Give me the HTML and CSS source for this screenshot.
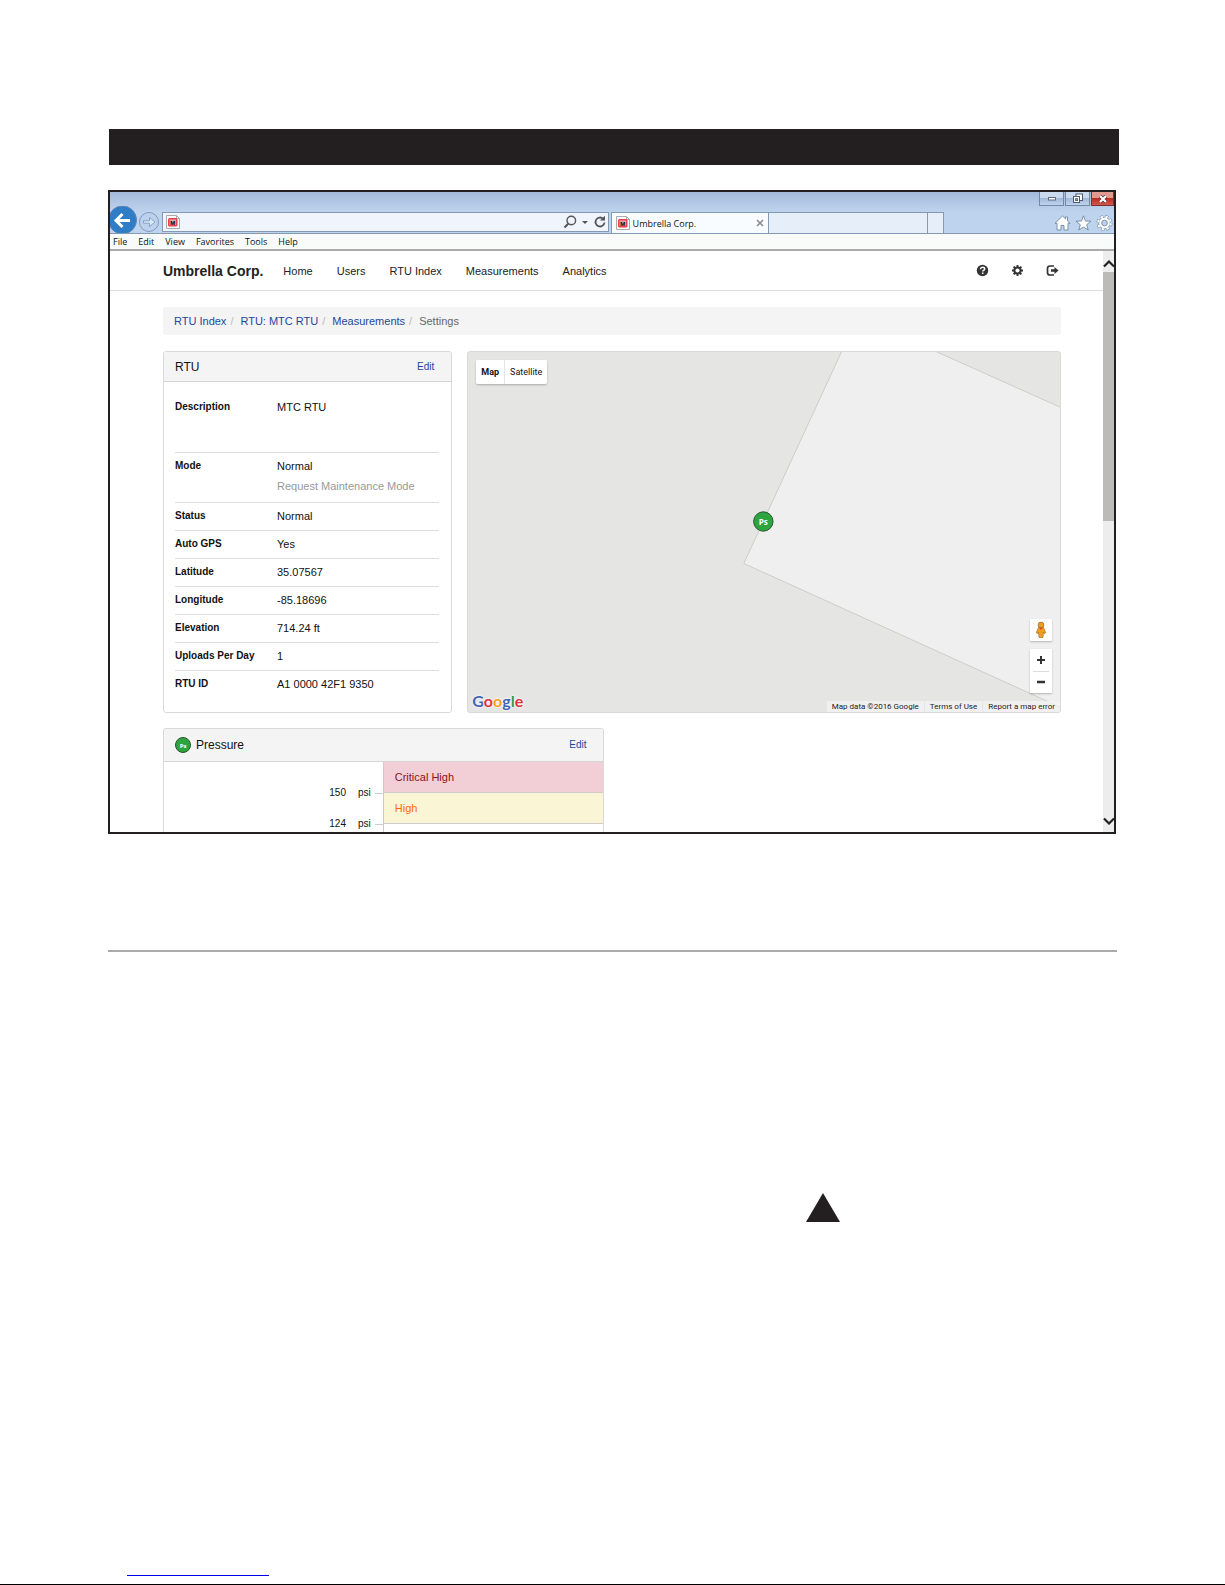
FILE: index.html
```html
<!DOCTYPE html>
<html lang="en">
<head>
<meta charset="utf-8">
<title>Umbrella Corp.</title>
<link rel="stylesheet" href="styles.css">
</head>
<body>
<main class="sheet">
  <div class="band"></div>

  <section class="window">
    <header class="chrome">
      <div class="caption">
        <button class="cap" aria-label="Minimize"><svg width="10" height="6" viewBox="0 0 10 6"><rect x="1.5" y="1.5" width="7" height="2.5" fill="#fff" stroke="#5b6b85"/></svg></button>
        <button class="cap" aria-label="Restore"><svg width="12" height="11" viewBox="0 0 12 11"><rect x="4" y="1" width="6.5" height="6.5" fill="#fff" stroke="#4b5a72"/><rect x="1.5" y="3.5" width="6" height="6" fill="#fff" stroke="#4b5a72"/><rect x="3.6" y="5.6" width="2" height="2" fill="#8aa" stroke="#4b5a72" stroke-width=".8"/></svg></button>
        <button class="cap cap-close" aria-label="Close"><svg width="12" height="10" viewBox="0 0 12 10"><path d="M3 2l6 6M9 2l-6 6" stroke="#6a2a2a" stroke-width="3.6"/><path d="M3 2l6 6M9 2l-6 6" stroke="#fff" stroke-width="2.2"/></svg></button>
      </div>
      <div class="toolbar">
        <div class="history">
          <button class="plain" aria-label="Back"><svg width="27" height="27" viewBox="0 0 27 27"><circle cx="12.5" cy="14" r="14" fill="#2f7cc7" stroke="#5d86b5"/><path d="M20 14.5H7M12.5 8L6 14.5l6.500 6.500" fill="none" stroke="#fff" stroke-width="3"/></svg></button>
          <button class="plain" aria-label="Forward"><svg width="22" height="21" viewBox="0 0 22 21"><circle cx="12" cy="10" r="9.500" fill="#bcd2ec" stroke="#7f9cc0"/><path d="M6.500 8.800h6V5.500l5.500 4.500-5.500 4.500v-3.300h-6z" fill="#dce9f8" stroke="#7f9cc0" stroke-width=".9"/></svg></button>
        </div>
        <div class="address">
          <svg class="favicon" viewBox="0 0 14 14"><path d="M.5.5h10l3 3v10H.5z" fill="#fff" stroke="#aaa"/><path d="M10.500.5v3h3" fill="none" stroke="#aaa"/><rect x="2" y="3" width="9.500" height="8.500" rx="1.500" fill="#e9404f"/><rect x="3.500" y="4.500" width="6.500" height="5.500" fill="#d9a9ab"/><text x="6.750" y="9.600" text-anchor="middle" class="favicon-letter">M</text></svg>
          <input class="address-input" type="text" aria-label="Address">
          <button class="plain" aria-label="Search"><svg width="14" height="14" viewBox="0 0 14 14"><circle cx="8.300" cy="5.500" r="4.300" fill="none" stroke="#555" stroke-width="1.400"/><path d="M5.200 8.700L1.500 12.500" stroke="#555" stroke-width="2"/></svg></button>
          <button class="plain" aria-label="Suggestions"><svg width="14" height="14" viewBox="0 0 14 14"><path d="M4 6h6L7 9z" fill="#555"/></svg></button>
          <button class="plain" aria-label="Refresh"><svg width="14" height="14" viewBox="0 0 14 14"><path d="M10.200 3.800A4.500 4.500 0 1 0 11.500 7.500" fill="none" stroke="#555" stroke-width="1.800"/><path d="M7 5.500h5V.8z" fill="#555"/></svg></button>
        </div>
        <div class="tab tab-active">
          <svg class="favicon" viewBox="0 0 14 14"><path d="M.5.5h10l3 3v10H.5z" fill="#fff" stroke="#aaa"/><path d="M10.500.5v3h3" fill="none" stroke="#aaa"/><rect x="2" y="3" width="9.500" height="8.500" rx="1.500" fill="#e9404f"/><rect x="3.500" y="4.500" width="6.500" height="5.500" fill="#d9a9ab"/><text x="6.750" y="9.600" text-anchor="middle" class="favicon-letter">M</text></svg>
          <span class="tab-title">Umbrella Corp.</span>
          <button class="plain" aria-label="Close tab"><svg width="8" height="8" viewBox="0 0 8 8"><path d="M1 1l6 6M7 1L1 7" stroke="#888" stroke-width="1.500"/></svg></button>
        </div>
        <div class="tab"></div>
        <button class="tab" aria-label="New tab"></button>
        <div class="tools">
          <button class="plain" aria-label="Home page"><svg width="17" height="16" viewBox="0 0 17 16"><path d="M8.500 1L1 8.300h2V15h4v-4.500h3V15h4V8.300h2l-2.500-2.500V2h-2v1.800z" fill="#fff" stroke="#7187a3" stroke-width=".9"/></svg></button>
          <button class="plain" aria-label="Favorites"><svg width="17" height="16" viewBox="0 0 17 16"><path d="M8.500.8l2 5.200 5.500.2-4.300 3.500 1.500 5.300-4.700-3-4.700 3 1.500-5.300L1 6.200 6.500 6z" fill="#fff" stroke="#7187a3" stroke-width=".9"/></svg></button>
          <button class="plain" aria-label="Tools"><svg width="17" height="16" viewBox="0 0 17 16"><circle cx="8.500" cy="8" r="6.500" fill="none" stroke="#7187a3" stroke-width="3" stroke-dasharray="2.900 2.200"/><circle cx="8.500" cy="8" r="5.800" fill="#fff" stroke="#7187a3" stroke-width=".8"/><circle cx="8.500" cy="8" r="6.400" fill="none" stroke="#fff" stroke-width="2" stroke-dasharray="2.400 2.620" stroke-dashoffset="-.2"/><circle cx="8.500" cy="8" r="2.800" fill="#bdd2ec" stroke="#7187a3" stroke-width=".9"/></svg></button>
        </div>
      </div>
      <nav class="menubar">
        <button class="plain">File</button>
        <button class="plain">Edit</button>
        <button class="plain">View</button>
        <button class="plain">Favorites</button>
        <button class="plain">Tools</button>
        <button class="plain">Help</button>
      </nav>
    </header>

    <div class="viewport">
      <div class="page">
        <nav class="navbar">
          <a class="brand" href="#">Umbrella Corp.</a>
          <div class="nav-links">
            <a href="#">Home</a>
            <a href="#">Users</a>
            <a href="#">RTU Index</a>
            <a href="#">Measurements</a>
            <a href="#">Analytics</a>
          </div>
          <div class="nav-icons">
            <a href="#" aria-label="Help"><svg width="13" height="13" viewBox="0 0 13 13"><circle cx="6.500" cy="6.500" r="5.700" fill="#333"/><path d="M4.500 5.200c0-2.600 4.200-2.400 4.200-.2 0 1.500-2 1.300-2 2.600" fill="none" stroke="#fff" stroke-width="1.500"/><rect x="5.900" y="8.500" width="1.600" height="1.500" fill="#fff"/></svg></a>
            <a href="#" aria-label="Settings"><svg width="13" height="13" viewBox="0 0 13 13"><circle cx="6.500" cy="6.500" r="3.100" fill="none" stroke="#333" stroke-width="2"/><path d="M6.500 1v2M6.500 10v2M1 6.500h2M10 6.500h2M2.600 2.600L4 4M9 9l1.400 1.400M10.400 2.600L9 4M4 9l-1.400 1.400" stroke="#333" stroke-width="1.900"/></svg></a>
            <a href="#" aria-label="Log out"><svg width="13" height="13" viewBox="0 0 13 13"><path d="M8 2H4Q1.500 2 1.500 4.500v4Q1.500 11 4 11h4" fill="none" stroke="#333" stroke-width="1.700"/><path d="M5 5.200h3.500V3l4 3.500-4 3.500V7.800H5z" fill="#333"/></svg></a>
          </div>
        </nav>

        <div class="content">
          <ol class="breadcrumb">
            <li><a href="#">RTU Index</a></li>
            <li><a href="#">RTU: MTC RTU</a></li>
            <li><a href="#">Measurements</a></li>
            <li>Settings</li>
          </ol>

          <section class="card card-rtu">
            <header class="card-head">
              <h2>RTU</h2>
              <a href="#">Edit</a>
            </header>
            <table class="facts">
              <tr class="tall"><th scope="row">Description</th><td>MTC RTU</td></tr>
              <tr class="mode"><th scope="row">Mode</th><td>Normal<br><a class="muted" href="#">Request Maintenance Mode</a></td></tr>
              <tr><th scope="row">Status</th><td>Normal</td></tr>
              <tr><th scope="row">Auto GPS</th><td>Yes</td></tr>
              <tr><th scope="row">Latitude</th><td>35.07567</td></tr>
              <tr><th scope="row">Longitude</th><td>-85.18696</td></tr>
              <tr><th scope="row">Elevation</th><td>714.24 ft</td></tr>
              <tr><th scope="row">Uploads Per Day</th><td>1</td></tr>
              <tr><th scope="row">RTU ID</th><td>A1 0000 42F1 9350</td></tr>
            </table>
          </section>

          <section class="card card-map">
            <svg class="map" viewBox="0 0 592 360" preserveAspectRatio="xMidYMid slice">
              <path d="M374 0L276 211.500 612 364V64L469 0z" fill="#efefef"/>
              <path d="M374-1L276 211.500 612 364M467-1L612 64" fill="none" stroke="#cdcdcb"/>
              <circle cx="295.500" cy="169.500" r="9.700" fill="#2da53f" stroke="#26562d"/>
              <text x="295.500" y="172.500" text-anchor="middle" class="pin-text">Ps</text>
            </svg>
            <div class="map-type">
              <button class="is-on">Map</button>
              <button>Satellite</button>
            </div>
            <div class="map-controls">
              <button aria-label="Street View"><svg width="12" height="18" viewBox="0 0 12 18"><circle cx="6" cy="4" r="2.900" fill="#f0a01c" stroke="#7a5a20" stroke-width=".6"/><path d="M3.500 6.500h5l2.300 5.200-1.600.8-.7-1.500-.5 5.500H4l-.5-5.500-.7 1.500-1.600-.8z" fill="#f0a01c" stroke="#9b6a14" stroke-width=".6"/><path d="M4.200 6.800h3.600L6 9z" fill="#e0432c"/></svg></button>
              <div class="zoom">
                <button aria-label="Zoom in"><svg width="10" height="10" viewBox="0 0 10 10"><path d="M5 1v8M1 5h8" stroke="#333" stroke-width="2"/></svg></button>
                <button aria-label="Zoom out"><svg width="10" height="10" viewBox="0 0 10 10"><path d="M1 5h8" stroke="#333" stroke-width="2.500"/></svg></button>
              </div>
            </div>
            <div class="google"><span class="g-blue">G</span><span class="g-red">o</span><span class="g-yellow">o</span><span class="g-blue">g</span><span class="g-green">l</span><span class="g-red">e</span></div>
            <div class="credits">
              <span>Map data ©2016 Google</span>
              <a href="#">Terms of Use</a>
              <a href="#">Report a map error</a>
            </div>
          </section>

          <section class="card card-pressure">
            <header class="card-head">
              <svg width="16" height="16" viewBox="0 0 16 16"><circle cx="8" cy="8" r="7.500" fill="#2da53f" stroke="#26562d"/><text x="8" y="10.500" text-anchor="middle" class="badge-text">Ps</text></svg>
              <h2>Pressure</h2>
              <a href="#">Edit</a>
            </header>
            <div class="levels">
              <div class="scale">
                <div class="mark"><span>150</span><span>psi</span></div>
                <div class="mark"><span>124</span><span>psi</span></div>
              </div>
              <div class="zones">
                <div class="zone zone-critical">Critical High</div>
                <div class="zone zone-high">High</div>
              </div>
            </div>
          </section>
        </div>
      </div>

      <div class="scrollbar">
        <svg width="11" height="20" viewBox="0 0 11 20"><path d="M1 14.500L6 9.500l5 5" fill="none" stroke="#222" stroke-width="2.200"/></svg>
        <div class="thumb"></div>
        <svg width="11" height="20" viewBox="0 0 11 20"><path d="M1 6.500L6 11.500l5-5" fill="none" stroke="#222" stroke-width="2.200"/></svg>
      </div>
    </div>
  </section>

  <hr class="rule">
  <svg class="triangle" width="34" height="29" viewBox="0 0 34 29"><path d="M17 0l17 29H0z" fill="#231f20"/></svg>
</main>
<footer class="foot"><a class="foot-link" href="#" aria-label="Link"></a></footer>
</body>
</html>
```
FILE: styles.css
```css
* { box-sizing: border-box; }

body {
  margin: 0;
  min-height: 100vh;
  display: flex;
  flex-direction: column;
  justify-content: space-between;
  background: #fff;
  color: #111;
  font: 11px/20px "Liberation Sans", Arial, sans-serif;
}

a { color: #1c479c; text-decoration: none; }
button { margin: 0; padding: 0; font: inherit; color: inherit; }
svg { display: block; flex: none; }
h2 { margin: 0; font-size: 12px; font-weight: 400; }

.plain { display: flex; border: 0; background: none; }

.sheet { display: flex; flex-direction: column; padding: 129px 106px 0 108px; }
.band { height: 36px; margin-left: 1px; background: #231f20; }

/* Browser window */
.window { margin: 25px 3px 0 0; border: 2px solid #231f20; overflow: hidden; }
.chrome { background: linear-gradient(#a3bbdc, #bed3ed 20px); font: 9px/15px "Open Sans", "Noto Sans", sans-serif; }
.caption { display: flex; justify-content: flex-end; align-items: flex-start; gap: 1px; height: 20px; }
.cap {
  display: flex; align-items: center; justify-content: center;
  width: 25px; height: 14px;
  border: 1px solid #7388a5; border-top: 0;
  background: linear-gradient(#c9d9ee 45%, #a2b9d8 50%, #bed3ed);
}
.cap-close { width: 23px; border-color: #7c2f2f; background: linear-gradient(#e09a90 45%, #bb2d22 50%, #d0564a); }

.toolbar {
  display: grid;
  grid-template-columns: 52px minmax(0, 446fr) 2px minmax(0, 158fr) minmax(0, 159fr) 16px 170px;
  height: 22px;
  border-bottom: 1px solid #8499b3;
}
.history { display: flex; align-items: flex-end; height: 21px; }
.address { display: flex; align-items: center; gap: 1px; height: 20px; padding: 0 1px 0 3px; border: 1px solid #8499b3; background: #eff4fd; }
.address-input { flex: 1; min-width: 0; height: 16px; border: 0; outline: 0; background: none; font: inherit; }
.favicon { width: 14px; height: 14px; }
.favicon-letter { font: bold 6px "Liberation Sans", Arial, sans-serif; }
.tab { display: flex; align-items: center; gap: 3px; padding: 0 4px; border: 1px solid #8499b3; border-width: 1px 1px 0 0; background: #e6eefa; }
.tab-active { grid-column: 4; border-left-width: 1px; background: #f9fcfe; }
.tab-title { flex: 1; }
.tools { display: flex; align-items: center; justify-content: flex-end; gap: 4px; padding-right: 1px; }
.menubar { display: flex; gap: 11px; height: 17px; padding-left: 3px; border-bottom: 2px solid #aaa; background: #f9fbfb; }

/* Application page */
.viewport { display: flex; }
.page { flex: 1; min-width: 0; }
.navbar { display: flex; align-items: center; height: 40px; padding: 0 44px 0 53px; border-bottom: 1px solid #ddd; }
.navbar a { color: #222; }
.navbar .brand { margin-right: 20px; font-size: 14px; font-weight: 700; }
.nav-links { display: flex; flex: 1; gap: 24px; }
.nav-icons { display: flex; gap: 22px; }

.content {
  display: grid;
  grid-template-columns: repeat(12, minmax(0, 1fr));
  gap: 15px;
  padding: 16px 42px 0 53px;
}
.breadcrumb {
  grid-column: 1 / -1;
  display: flex;
  height: 28px; margin: 0 0 1px; padding: 4px 11px;
  border-radius: 3px; background: #f4f4f4; color: #666;
  list-style: none;
}
.breadcrumb li + li::before { content: "/"; padding: 0 7px 0 4px; color: #bbb; }

.card { border: 1px solid #d9d9d9; border-radius: 3px; overflow: hidden; }
.card-rtu { grid-column: span 4; }
.card-map { grid-column: span 8; position: relative; background: #e5e5e3; }
.card-pressure { grid-column: span 6; border-bottom: 0; border-radius: 3px 3px 0 0; }
.card-head { display: flex; align-items: center; gap: 5px; height: 30px; padding: 0 17px 0 11px; border-bottom: 1px solid #d6d6d6; background: #f4f4f4; }
.card-head h2 { flex: 1; }
.card-head a { font-size: 10px; }
.card-pressure .card-head { height: 33px; padding-bottom: 1px; }

.facts { width: calc(100% - 23px); margin: 0 12px 14px 11px; border-collapse: collapse; }
.facts tr { height: 28px; border-bottom: 1px solid #ddd; }
.facts tr:last-child { border-bottom: 0; }
.facts th, .facts td { padding: 3px 0 4px; text-align: left; vertical-align: top; white-space: nowrap; }
.facts th { width: 102px; font-size: 10px; }
.facts .tall { height: 70px; }
.facts .tall th, .facts .tall td { padding-top: 15px; }
.facts .mode { height: 50px; }
.muted { color: #999; }

/* Map */
.map { position: absolute; inset: 0; width: 100%; height: 100%; }
.pin-text { fill: #fff; font: bold 8px "Open Sans", sans-serif; }
.badge-text { fill: #fff; font: bold 6px "Open Sans", sans-serif; }
.card-map button { border: 0; background: #fff; }
.map-type { position: absolute; top: 8px; left: 8px; display: flex; height: 24px; border-radius: 2px; background: #fff; box-shadow: 0 1px 2px rgba(0, 0, 0, .25); overflow: hidden; font: 9px/24px Roboto, sans-serif; }
.map-type button { padding: 0 5px; }
.map-type .is-on { border-right: 1px solid #e4e4e4; font-weight: 700; }
.map-controls { position: absolute; right: 8px; bottom: 19px; display: grid; gap: 8px; }
.map-controls button { display: flex; align-items: center; justify-content: center; width: 22px; height: 22px; }
.map-controls > button, .zoom { border-radius: 1px; box-shadow: 0 1px 2px rgba(0, 0, 0, .25); }
.zoom { background: #fff; }
.zoom button + button { background: linear-gradient(#ddd, #ddd) center top / 16px 1px no-repeat #fff; }
.google { position: absolute; left: 4px; bottom: 1px; font: 700 16px/20px Lato, sans-serif; text-shadow: 0 0 2px #fff, 0 0 2px #fff; }
.g-blue { color: #4263b8; }
.g-red { color: #e0303a; }
.g-yellow { color: #f2a313; }
.g-green { color: #2f9a48; }
.credits { position: absolute; right: 0; bottom: 0; display: flex; gap: 1px; font: 8px/11px Roboto, sans-serif; }
.credits > * { padding: 0 5px; background: rgba(245, 245, 245, .7); color: #222; }

/* Pressure levels */
.levels { display: flex; }
.scale { flex: 1; display: flex; flex-direction: column; gap: 15px; padding-top: 23px; }
.mark { display: flex; align-items: center; justify-content: flex-end; gap: 12px; font-size: 10px; line-height: 16px; }
.mark::after { content: ""; width: 8px; height: 1px; margin-left: -8px; background: #ccc; }
.zones { flex: 1; margin-right: 1px; border-left: 1px solid #ccc; }
.zone { height: 31px; padding: 5px 11px; border-bottom: 1px solid #ccc; }
.zone-critical { background: #f2cfd6; color: #8b1020; }
.zone-high { background: #faf6d5; color: #ff6a00; }

.scrollbar { display: flex; flex-direction: column; width: 11px; padding-top: 1px; background: #ededed; }
.thumb { height: 43%; margin-bottom: auto; background: #bcbbba; }

/* Below the window */
.rule { width: calc(100% - 2px); height: 2px; margin: 116px 0 0; border: 0; background: #aaa; }
.triangle { margin: 241px 0 0 69%; }
.foot { padding: 0 127px 8px; border-bottom: 1px solid #000; }
.foot-link { display: block; width: 142px; height: 1px; background: #00e; }
```
